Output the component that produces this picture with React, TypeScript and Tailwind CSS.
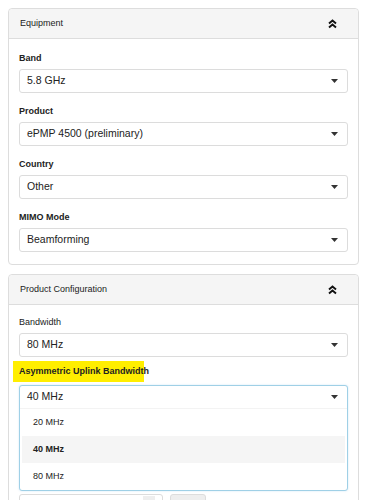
import React from "react";

const Caret = () => (
  <svg width="7" height="4" viewBox="0 0 7 4" className="shrink-0 mr-[1px]">
    <path d="M0 0 H7 L3.5 4 Z" fill="#333" />
  </svg>
);

const DoubleUp = () => (
  <svg width="9" height="10" viewBox="0 0 9 10">
    <path d="M1 4.5 L4.5 1.5 L8 4.5" fill="none" stroke="#111" strokeWidth="1.9" />
    <path d="M1 8.5 L4.5 5.5 L8 8.5" fill="none" stroke="#111" strokeWidth="1.9" />
  </svg>
);

const Select = ({ value }: { value: string }) => (
  <div className="h-[24px] border border-[#dcdcdc] rounded-[3px] bg-white flex items-center justify-between pl-[7px] pr-[8px] text-[10.5px] text-[#222] mb-[12px]">
    <span>{value}</span>
    <Caret />
  </div>
);

const Label = ({ children, bold = true }: { children: React.ReactNode; bold?: boolean }) => (
  <div className={bold ? "text-[9px] font-bold text-[#222] leading-[13px] mb-[4px]" : "text-[9px] text-[#222] leading-[13px] mb-[4px]"}>{children}</div>
);

const Header = ({ title }: { title: string }) => (
  <div className="h-[30px] bg-[#f5f5f5] border-b border-[#dddddd] rounded-t-[4px] flex items-center justify-between pl-[11px] pr-[21px]">
    <span className="text-[9px] text-[#222]">{title}</span>
    <DoubleUp />
  </div>
);

export default function App() {
  return (
    <div className="w-[365px] h-[500px] overflow-hidden bg-white pt-[8px] pl-[8px] pr-[6px]" style={{ fontFamily: '"Liberation Sans", Arial, sans-serif' }}>
      <div className="border border-[#dddddd] rounded-[4px]">
        <Header title="Equipment" />
        <div className="pt-[13px] px-[10px]">
          <Label>Band</Label>
          <Select value="5.8 GHz" />
          <Label>Product</Label>
          <Select value="ePMP 4500 (preliminary)" />
          <Label>Country</Label>
          <Select value="Other" />
          <Label>MIMO Mode</Label>
          <Select value="Beamforming" />
        </div>
      </div>
      <div className="border border-[#dddddd] rounded-[4px] mt-[9px] h-[300px]">
        <Header title="Product Configuration" />
        <div className="pt-[11px] px-[10px]">
          <Label bold={false}>Bandwidth</Label>
          <div className="mb-[-8px]">
            <Select value="80 MHz" />
          </div>
          <div className="ml-[-6px] w-[131px] h-[21px] bg-[#ffee00] flex items-center pl-[6px] mb-[3px] whitespace-nowrap">
            <span className="text-[9px] font-bold text-[#222]">Asymmetric Uplink Bandwidth</span>
          </div>
          <div className="border border-[#9fd0e6] rounded-[3px] bg-white shadow-[0_0_2px_rgba(102,175,233,0.35)]">
            <div className="h-[23px] flex items-center justify-between pl-[7px] pr-[8px] text-[10.5px] text-[#222] border-b border-[#f3f3f3]">
              <span>40 MHz</span>
              <Caret />
            </div>
            <div className="px-[2px]">
              <div className="h-[27px] flex items-center pl-[11px] text-[9px] text-[#222]">20 MHz</div>
              <div className="h-[27px] flex items-center pl-[11px] text-[9px] font-bold text-[#222] bg-[#f5f5f5]">40 MHz</div>
              <div className="h-[27px] flex items-center pl-[11px] text-[9px] text-[#222]">80 MHz</div>
            </div>
          </div>
          <div className="flex gap-[7px] mt-[3px]">
            <div className="w-[144px] h-[24px] border border-[#dcdcdc] rounded-[3px] relative">
              <div className="absolute right-[7px] top-[1px] w-[12px] h-[10px] bg-[#eeeeee]" />
            </div>
            <div className="w-[36px] h-[24px] bg-[#eeeeee] border border-[#dddddd] rounded-[3px]" />
          </div>
        </div>
      </div>
    </div>
  );
}
